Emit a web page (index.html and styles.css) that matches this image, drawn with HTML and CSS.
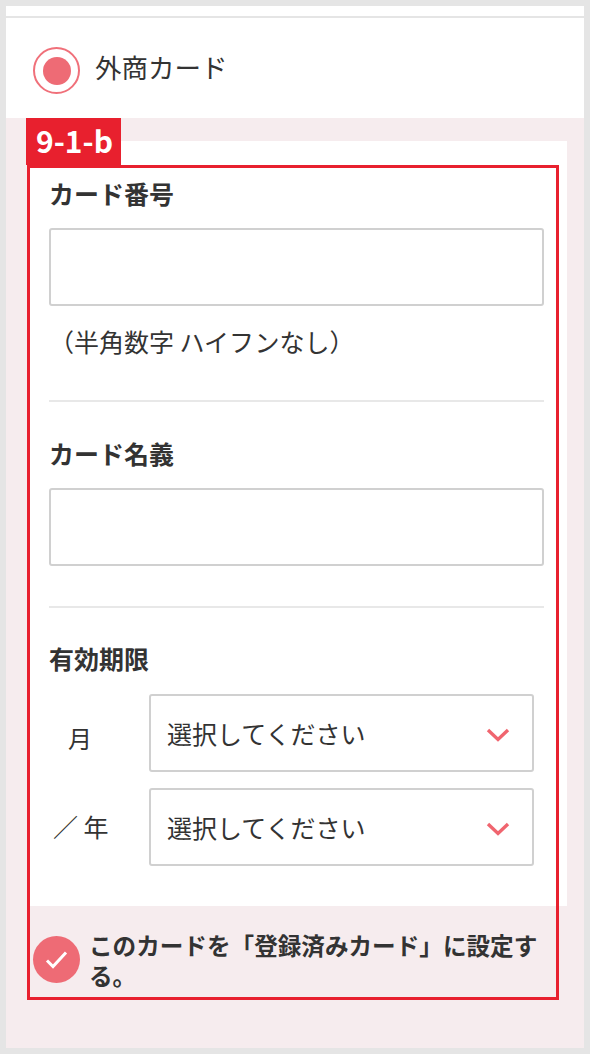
FILE: index.html
```html
<!DOCTYPE html>
<html lang="ja">
<head>
    <title>外商カード</title>
    <link rel="stylesheet" href="styles.css">
</head>
<body>
    <div class="frame">
        <div class="top-bar"></div>

        <div class="radio-row">
            <span class="radio"><span class="radio-dot"></span></span>
            <span class="radio-label">外商カード</span>
        </div>

        <div class="pink-area">
            <div class="card">
                <div class="field-title first">カード番号</div>
                <div class="text-input"></div>
                <div class="hint">（半角数字 ハイフンなし）</div>
                <div class="divider"></div>

                <div class="field-title second">カード名義</div>
                <div class="text-input"></div>
                <div class="divider tight"></div>

                <div class="field-title expiry">有効期限</div>
                <div class="date-row">
                    <div class="date-label month">月</div>
                    <div class="select">
                        <span>選択してください</span>
                        <svg class="chevron" width="24" height="14" viewBox="0 0 24 14"><path d="M2 2l10 9.5L22 2" fill="none" stroke="#f0656f" stroke-width="3.4"/></svg>
                    </div>
                </div>
                <div class="date-row">
                    <div class="date-label year">／ 年</div>
                    <div class="select">
                        <span>選択してください</span>
                        <svg class="chevron" width="24" height="14" viewBox="0 0 24 14"><path d="M2 2l10 9.5L22 2" fill="none" stroke="#f0656f" stroke-width="3.4"/></svg>
                    </div>
                </div>
            </div>

            <div class="check-row">
                <span class="check">
                    <svg width="24" height="20" viewBox="0 0 24 20"><path d="M2 10.500l6 6L21 2.500" fill="none" stroke="#fff" stroke-width="3"/></svg>
                </span>
                <span class="check-label">このカードを「登録済みカード」に設定する。</span>
            </div>

            <div class="note-box"></div>
            <div class="note-tag">9-1-b</div>
        </div>
    </div>
</body>
</html>
```

FILE: styles.css
```css
html, body {
    margin: 0;
    padding: 0;
}
body {
    height: 1054px;
    box-sizing: border-box;
    padding: 6px;
    background-color: #e5e5e5;
    font-family: "Noto Sans CJK JP", "Noto Sans", sans-serif;
    color: #333;
    overflow: hidden;
}
.frame {
    height: 1042px;
    display: flex;
    flex-direction: column;
    background-color: #fff;
}
.top-bar {
    height: 10px;
    border-bottom: 2px solid #e5e5e5;
}
.radio-row {
    height: 100px;
    box-sizing: border-box;
    padding: 5px 0 0 27px;
    display: flex;
    align-items: center;
}
.radio {
    width: 47px;
    height: 47px;
    box-sizing: border-box;
    border: 2px solid #f0707a;
    border-radius: 50%;
    display: flex;
    align-items: center;
    justify-content: center;
}
.radio-dot {
    width: 28px;
    height: 28px;
    border-radius: 50%;
    background-color: #ee6b75;
}
.radio-label {
    margin: 0 0 8px 15px;
    font-size: 26.500px;
    line-height: 38px;
}
.pink-area {
    flex: 1;
    position: relative;
    background-color: #f6ecee;
    padding-top: 23px;
}
.card {
    height: 765px;
    box-sizing: border-box;
    margin: 0 17px 0 22px;
    padding: 0 23px 0 21px;
    background-color: #fff;
}
.field-title {
    font-size: 25px;
    line-height: 36px;
    font-weight: 700;
}
.field-title.first {
    padding-top: 34px;
    margin-bottom: 17px;
}
.field-title.second {
    padding-top: 33px;
    margin-bottom: 17px;
}
.field-title.expiry {
    padding-top: 32px;
    margin-bottom: 18px;
}
.text-input {
    height: 78px;
    box-sizing: border-box;
    border: 2px solid #d0d0d0;
    border-radius: 3px;
}
.hint {
    font-size: 25px;
    line-height: 36px;
    margin-top: 17px;
}
.divider {
    height: 2px;
    margin-top: 41px;
    background-color: #e8e8e8;
}
.divider.tight {
    margin-top: 40px;
}
.date-row {
    display: flex;
    align-items: center;
    margin: 0 10px 16px 0;
}
.date-label {
    width: 100px;
    font-size: 24px;
    line-height: 36px;
}
.date-label.month {
    padding-left: 19px;
    width: 81px;
    padding-top: 10px;
}
.date-label.year {
    box-sizing: border-box;
    padding: 0 0 3px 4px;
    font-size: 25px;
}
.select {
    flex: 1;
    height: 78px;
    box-sizing: border-box;
    border: 2px solid #d0d0d0;
    border-radius: 3px;
    padding: 0 22px 0 16px;
    display: flex;
    align-items: center;
    justify-content: space-between;
    font-size: 25px;
}
.chevron {
    margin-top: 3px;
}
.check-row {
    display: flex;
    align-items: flex-start;
    padding: 24px 30px 0 27px;
}
.check {
    flex: none;
    width: 47px;
    height: 47px;
    margin-top: 6px;
    border-radius: 50%;
    background-color: #ee6b75;
    display: flex;
    align-items: center;
    justify-content: center;
}
.check-label {
    margin-left: 9px;
    font-size: 23.600px;
    line-height: 30px;
    font-weight: 700;
}
.note-box {
    position: absolute;
    left: 21px;
    top: 47px;
    width: 532px;
    height: 835px;
    box-sizing: border-box;
    border: 3px solid #e8202e;
}
.note-tag {
    position: absolute;
    left: 20px;
    top: 0;
    width: 95px;
    height: 47px;
    padding-left: 2px;
    box-sizing: border-box;
    background-color: #e8202e;
    color: #fff;
    font-size: 30px;
    line-height: 45px;
    font-weight: 700;
    text-align: center;
}
```
